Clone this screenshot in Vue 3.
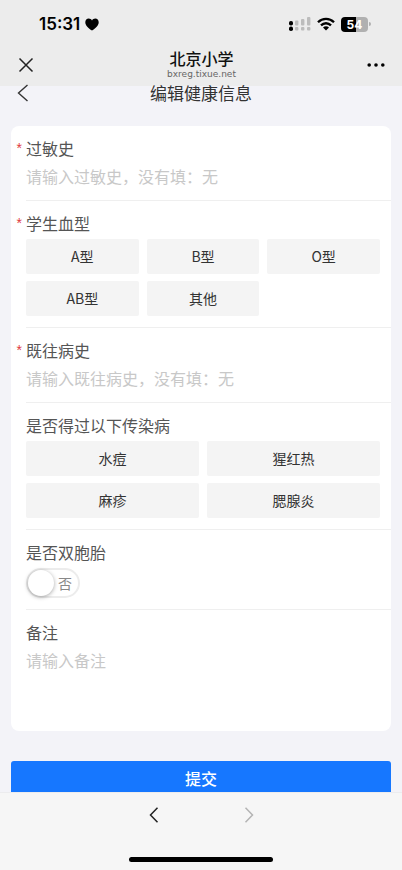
<script setup>
import { reactive } from 'vue'

const bloodTypes = ['A型', 'B型', 'O型', 'AB型', '其他']
const diseases = ['水痘', '猩红热', '麻疹', '腮腺炎']

const form = reactive({
  allergy: '',
  blood: '',
  history: '',
  diseases: [],
  twins: false,
  remark: ''
})

function toggleDisease(name) {
  const i = form.diseases.indexOf(name)
  if (i < 0) form.diseases.push(name)
  else form.diseases.splice(i, 1)
}
</script>

<template>
  <div class="screen">
    <header class="top">
      <div class="status">
        <div class="clock">
          <span>15:31</span>
          <svg width="14" height="13" viewBox="0 0 14 13" aria-hidden="true">
            <path d="M7 12.6C3.4 10 .3 7.500.3 4.200.3 2 1.800.5 3.700.5 5.100.5 6.300 1.200 7 2.400 7.700 1.200 8.900.5 10.300.5 12.200.5 13.700 2 13.700 4.200 13.700 7.500 10.600 10 7 12.600Z" />
          </svg>
        </div>
        <div class="signals">
          <svg width="22" height="16" viewBox="0 0 22 16" aria-hidden="true">
            <g fill="#bcbcbc">
              <rect x="6" y="4.500" width="3.400" height="5" rx="1" />
              <rect x="12" y="3" width="3.400" height="6.500" rx="1" />
              <rect x="18" y="1" width="3.400" height="8.500" rx="1" />
              <rect x="6" y="11" width="3.400" height="3.600" rx="1" />
              <rect x="12" y="11" width="3.400" height="3.600" rx="1" />
              <rect x="18" y="11" width="3.400" height="3.600" rx="1" />
            </g>
            <rect x="0" y="5" width="4" height="4.500" rx="1.800" />
            <rect x="0" y="10.600" width="4" height="4.400" rx="1.800" />
          </svg>
          <svg width="18" height="14" viewBox="0 0 18 14" aria-hidden="true">
            <g fill="none" stroke="#000" stroke-width="2.300">
              <path d="M1 5.200C5.500.7 12.500.7 17 5.200" />
              <path d="M4 8.400C6.900 5.500 11.100 5.500 14 8.400" />
            </g>
            <path d="M9 13.500 6 10.500C7.700 8.900 10.300 8.900 12 10.500Z" />
          </svg>
          <div class="battery">
            <span class="cell">54</span>
            <i class="tip"></i>
          </div>
        </div>
      </div>
      <div class="bar">
        <button class="icon-btn" type="button" aria-label="关闭">
          <svg width="16" height="16" viewBox="0 0 16 16" aria-hidden="true">
            <path d="M1.500 1.500 14.500 14.500M14.500 1.500 1.500 14.500" fill="none" stroke="#222" stroke-width="1.500" />
          </svg>
        </button>
        <div class="site">
          <strong>北京小学</strong>
          <small>bxreg.tixue.net</small>
        </div>
        <button class="icon-btn end" type="button" aria-label="更多">
          <svg width="18" height="4" viewBox="0 0 18 4" aria-hidden="true">
            <circle cx="2.200" cy="2" r="1.800" /><circle cx="9" cy="2" r="1.800" /><circle cx="15.800" cy="2" r="1.800" />
          </svg>
        </button>
      </div>
    </header>

    <div class="nav">
      <button class="icon-btn" type="button" aria-label="返回">
        <svg width="12" height="18" viewBox="0 0 12 18" aria-hidden="true">
          <path d="M10.500 1 1.500 9 10.500 17" fill="none" stroke="#333" stroke-width="1.400" />
        </svg>
      </button>
      <h1>编辑健康信息</h1>
    </div>

    <main class="content">
      <form class="form" @submit.prevent>
        <div class="card">
          <div class="row">
            <label class="label required" for="allergy">过敏史</label>
            <input id="allergy" v-model="form.allergy" class="field" type="text" placeholder="请输入过敏史，没有填：无" />
          </div>
          <div class="row control-row" role="group" aria-labelledby="blood">
            <span id="blood" class="label required">学生血型</span>
            <div class="choices three">
              <button v-for="b in bloodTypes" :key="b" type="button" class="choice" :class="{ on: form.blood === b }"
                :aria-pressed="form.blood === b" @click="form.blood = b">{{ b }}</button>
            </div>
          </div>
          <div class="row">
            <label class="label required" for="history">既往病史</label>
            <input id="history" v-model="form.history" class="field" type="text" placeholder="请输入既往病史，没有填：无" />
          </div>
          <div class="row control-row" role="group" aria-labelledby="diseases">
            <span id="diseases" class="label">是否得过以下传染病</span>
            <div class="choices two">
              <button v-for="d in diseases" :key="d" type="button" class="choice" :class="{ on: form.diseases.includes(d) }"
                :aria-pressed="form.diseases.includes(d)" @click="toggleDisease(d)">{{ d }}</button>
            </div>
          </div>
          <div class="row control-row">
            <label class="label" for="twins">是否双胞胎</label>
            <label class="switch" :class="{ on: form.twins }">
              <input id="twins" v-model="form.twins" type="checkbox" role="switch" />
              <span class="knob"></span>
              <span class="state">{{ form.twins ? '是' : '否' }}</span>
            </label>
          </div>
          <div class="row">
            <label class="label" for="remark">备注</label>
            <textarea id="remark" v-model="form.remark" class="field area" rows="3" placeholder="请输入备注"></textarea>
          </div>
        </div>
        <button class="submit" type="submit">提交</button>
      </form>
    </main>

    <footer class="bottom">
      <div class="history">
        <button class="icon-btn" type="button" aria-label="后退">
          <svg width="10" height="16" viewBox="0 0 10 16" aria-hidden="true">
            <path d="M8.500.8 1.500 8 8.500 15.200" fill="none" stroke="#222" stroke-width="1.500" />
          </svg>
        </button>
        <button class="icon-btn" type="button" aria-label="前进" disabled>
          <svg width="10" height="16" viewBox="0 0 10 16" aria-hidden="true">
            <path d="M1.500.8 8.500 8 1.500 15.200" fill="none" stroke="#b4b4b4" stroke-width="1.500" />
          </svg>
        </button>
      </div>
      <div class="home"></div>
    </footer>
  </div>
</template>

<style>
body {
  margin: 0;
  background: #f3f3f8;
}
</style>

<style scoped>
.screen {
  display: flex;
  flex-direction: column;
  height: 100vh;
  overflow: hidden;
  background: #f3f3f8;
  color: #333;
  font-family: "Noto Sans CJK SC", sans-serif;
}
.screen * {
  box-sizing: border-box;
}
button, input, textarea {
  margin: 0;
  padding: 0;
  border: 0;
  background: none;
  color: inherit;
  font-family: inherit;
}
svg {
  display: block;
}
.top {
  flex: none;
  height: 86px;
  background: #ececec;
}
.status {
  display: flex;
  justify-content: space-between;
  align-items: center;
  height: 48px;
  padding: 0 31px 0 39px;
}
.clock {
  display: flex;
  align-items: center;
  gap: 5px;
  color: #000;
  font: 600 17px/20px Inter, sans-serif;
}
.signals {
  display: flex;
  align-items: center;
  gap: 6px;
}
.battery {
  display: flex;
  align-items: center;
  gap: 1px;
}
.cell {
  width: 27px;
  border-radius: 4px;
  background: linear-gradient(90deg, #000 54%, #b0b0b0 54%);
  color: #fff;
  font: 700 12px/15px Inter, sans-serif;
  text-align: center;
}
.tip {
  width: 2px;
  height: 4px;
  border-radius: 0 2px 2px 0;
  background: #b0b0b0;
}
.bar {
  display: grid;
  grid-template-columns: 1fr auto 1fr;
  align-items: center;
  height: 34px;
  padding: 0 17px 0 18px;
}
.icon-btn {
  display: flex;
  align-items: center;
}
.end {
  justify-self: end;
}
.site {
  display: flex;
  flex-direction: column;
  align-items: center;
  gap: 1px;
  padding-bottom: 3px;
}
.site strong {
  color: #111;
  font-size: 16px;
  font-weight: 500;
  line-height: 20px;
}
.site small {
  color: #666;
  font: 400 9px/10px "DejaVu Sans", sans-serif;
}
.nav {
  display: grid;
  grid-template-columns: 1fr auto 1fr;
  align-items: center;
  flex: none;
  height: 18px;
  margin-top: -2px;
  padding: 0 17px;
}
.nav h1 {
  margin: 0;
  font-size: 17px;
  font-weight: 400;
  line-height: 16px;
}
.content {
  flex: 1;
  min-height: 0;
  margin-top: 24px;
  overflow-y: auto;
  scrollbar-width: none;
}
.form {
  display: flex;
  flex-direction: column;
  gap: 30px;
  padding: 0 11px 24px;
}
.card {
  padding-left: 15px;
  border-radius: 8px;
  background: #fff;
}
.row {
  display: flex;
  flex-direction: column;
  align-items: stretch;
  gap: 4px;
  padding: 10px 11px 12px 0;
  border-bottom: 1px solid #efefef;
}
.row:last-child {
  border-bottom: 0;
}
.control-row {
  padding-bottom: 11px;
}
.label {
  position: relative;
  align-self: flex-start;
  color: #555;
  font-size: 16px;
  line-height: 24px;
}
.required::before {
  content: "*";
  position: absolute;
  right: 100%;
  margin-right: 4px;
  color: #e0393e;
  font-family: "Liberation Sans", sans-serif;
  font-size: 14px;
}
.field {
  width: 100%;
  height: 24px;
  outline: none;
  font-size: 16px;
  line-height: 24px;
}
.field::placeholder {
  color: #c8c8c8;
  opacity: 1;
}
.area {
  display: block;
  height: 71px;
  resize: none;
}
.choices {
  display: grid;
  gap: 7px 8px;
}
.three {
  grid-template-columns: repeat(3, 1fr);
}
.two {
  grid-template-columns: repeat(2, 1fr);
}
.choice {
  height: 35px;
  padding-bottom: 2px;
  border-radius: 2px;
  background: #f4f4f4;
  font-size: 14px;
}
.choice.on {
  background: #e7f1ff;
  color: #1677ff;
}
.switch {
  position: relative;
  display: flex;
  align-items: center;
  gap: 4px;
  align-self: flex-start;
  width: 54px;
  height: 30px;
  border: 2px solid #ececec;
  border-radius: 15px;
  background: #fff;
}
.switch input {
  position: absolute;
  inset: 0;
  width: 100%;
  height: 100%;
  opacity: 0;
}
.knob {
  width: 26px;
  height: 26px;
  border-radius: 50%;
  background: #fff;
  box-shadow: 0 1px 4px rgba(0, 0, 0, 0.35);
}
.state {
  color: #888;
  font-size: 14px;
  line-height: 24px;
}
.switch.on {
  flex-direction: row-reverse;
  border-color: #1677ff;
  background: #1677ff;
}
.switch.on .state {
  color: #fff;
}
.submit {
  height: 36px;
  padding-bottom: 2px;
  border-radius: 3px;
  background: #1677ff;
  color: #fff;
  font-size: 16px;
  font-weight: 500;
}
.bottom {
  display: flex;
  flex-direction: column;
  align-items: center;
  justify-content: space-between;
  flex: none;
  height: 78px;
  padding: 14px 0 8px;
  border-top: 1px solid #ececee;
  background: #f6f6f6;
}
.history {
  display: flex;
  gap: 85px;
}
.home {
  width: 36%;
  height: 5px;
  border-radius: 3px;
  background: #000;
}
</style>
